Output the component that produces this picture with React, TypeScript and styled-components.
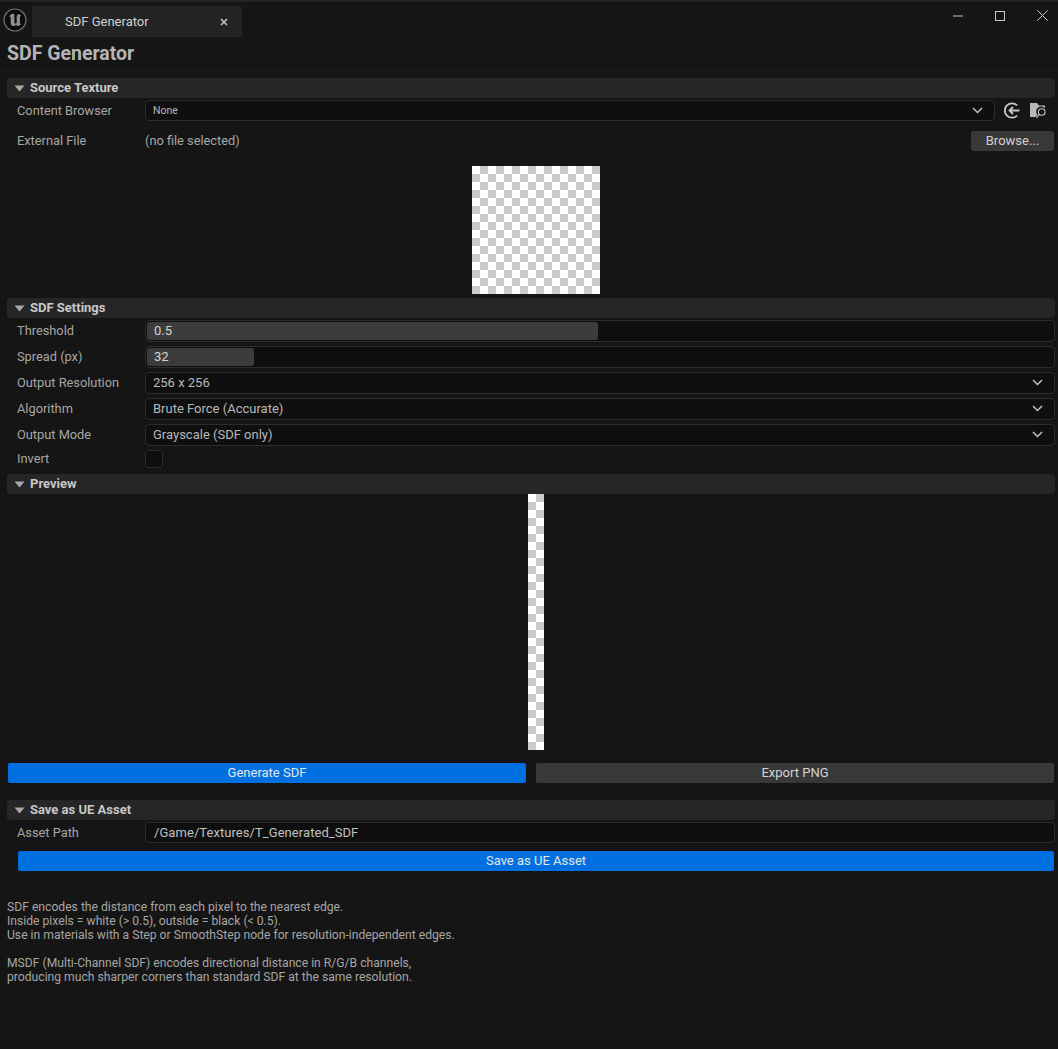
import styled, { createGlobalStyle } from "styled-components";

const GlobalStyle = createGlobalStyle`
    html, body {
        margin: 0;
        padding: 0;
        background: #151515;
    }
    * {
        box-sizing: border-box;
    }
`;

const selectRows = [
    { label: "Output Resolution", value: "256 x 256" },
    { label: "Algorithm", value: "Brute Force (Accurate)" },
    { label: "Output Mode", value: "Grayscale (SDF only)" }
];

const Chevron = () => (
    <svg width="11" height="7" viewBox="0 0 11 7" fill="none">
        <path d="M1 1l4.5 4.5L10 1" stroke="#c0c0c0" strokeWidth="1.5" />
    </svg>
);

const Caret = () => (
    <svg width="11" height="7" viewBox="0 0 11 7">
        <path d="M0.5 0.5h10L5.5 6.5z" fill="#a8a8a8" />
    </svg>
);

const App = () => {
    return (
        <>
            <GlobalStyle />
            <Window>
                <TitleBar>
                    <Logo>
                        <svg width="24" height="24" viewBox="0 0 24 24" fill="none">
                            <circle cx="12" cy="12" r="11" fill="#0b0b0b" stroke="#6e6e6e" strokeWidth="1.2" />
                            <path
                                d="M9.500 5.500C7.800 6.300 6.500 7.600 6 9.200c.6-.5 1.200-.6 1.700-.3v6.300c0 1.600 1.200 2.900 2.800 2.900 1 0 1.900-.5 2.500-1.300l1.700 1.500 3.600-2.100c-.9-.3-1.400-.8-1.400-1.800V8.500c.4-.3.900-.4 1.300-.2-.6-1.200-1.700-2-3.100-2.300-.1.800-.6 1.300-1.400 1.700v7.300l-1 .6c-.8.2-1.300-.2-1.300-1V6.900c-.6-.9-1.400-1.400-2.400-1.400z"
                                fill="#8e8e8e"
                            />
                        </svg>
                    </Logo>
                    <Tab>
                        <TabTitle>SDF Generator</TabTitle>
                        <TabClose>
                            <svg width="8" height="8" viewBox="0 0 8 8" fill="none">
                                <path d="M1 1l6 6M7 1L1 7" stroke="#c4c4c4" strokeWidth="1.6" />
                            </svg>
                        </TabClose>
                    </Tab>
                    <WindowControls>
                        <svg width="10" height="2" viewBox="0 0 10 2">
                            <path d="M0 1h10" stroke="#c8c8c8" strokeWidth="1" />
                        </svg>
                        <svg width="10" height="10" viewBox="0 0 10 10" fill="none">
                            <rect x=".5" y=".5" width="9" height="9" stroke="#c8c8c8" />
                        </svg>
                        <svg width="11" height="11" viewBox="0 0 11 11" fill="none">
                            <path d="M.3.3l10.400 10.400M10.700.3L.3 10.700" stroke="#c8c8c8" strokeWidth="1" />
                        </svg>
                    </WindowControls>
                </TitleBar>
                <PageTitle>SDF Generator</PageTitle>
                <Divider />
                <Content>
                    <SectionHeader>
                        <Caret />
                        <HeaderText>Source Texture</HeaderText>
                    </SectionHeader>
                    <Row $height={21}>
                        <Label>Content Browser</Label>
                        <Combo $small>
                            None
                            <Chevron />
                        </Combo>
                        <IconGroup>
                            <svg width="17" height="17" viewBox="0 0 17 17" fill="none">
                                <path d="M13.100 3.400a7.200 7.200 0 1 0 0 10.200" stroke="#c8c8c8" strokeWidth="1.800" />
                                <path d="M15.500 8.500H5.500M9 5L5.500 8.500 9 12" stroke="#c8c8c8" strokeWidth="1.800" />
                            </svg>
                            <svg width="17" height="17" viewBox="0 0 17 17">
                                <path d="M0 1h7l2 2.500h6v2.700A5 5 0 0 0 7.500 13L5.700 15H0z" fill="#b8b8b8" />
                                <circle cx="11.700" cy="10" r="3.300" fill="none" stroke="#c8c8c8" strokeWidth="1.100" />
                                <path d="M9.300 12.400L6.500 16" stroke="#c8c8c8" strokeWidth="1.200" />
                            </svg>
                        </IconGroup>
                    </Row>
                    <FileRow>
                        <Label>External File</Label>
                        <FileName>(no file selected)</FileName>
                        <BrowseButton>Browse...</BrowseButton>
                    </FileRow>
                    <Thumbnail />
                    <SectionHeader>
                        <Caret />
                        <HeaderText>SDF Settings</HeaderText>
                    </SectionHeader>
                    <Settings>
                        <Row $height={22}>
                            <Label>Threshold</Label>
                            <Slider>
                                <SliderFill $percent={49.8}>0.5</SliderFill>
                            </Slider>
                        </Row>
                        <Row $height={22}>
                            <Label>Spread (px)</Label>
                            <Slider>
                                <SliderFill $percent={11.8}>32</SliderFill>
                            </Slider>
                        </Row>
                        {selectRows.map(v => (
                            <Row $height={22} key={v.label}>
                                <Label>{v.label}</Label>
                                <Combo>
                                    {v.value}
                                    <Chevron />
                                </Combo>
                            </Row>
                        ))}
                        <Row $height={18}>
                            <Label>Invert</Label>
                            <Checkbox />
                        </Row>
                    </Settings>
                    <SectionHeader>
                        <Caret />
                        <HeaderText>Preview</HeaderText>
                    </SectionHeader>
                    <PreviewStrip />
                    <ButtonRow>
                        <Button $primary>Generate SDF</Button>
                        <Button>Export PNG</Button>
                    </ButtonRow>
                    <SectionHeader>
                        <Caret />
                        <HeaderText>Save as UE Asset</HeaderText>
                    </SectionHeader>
                    <Row $height={21}>
                        <Label>Asset Path</Label>
                        <TextInput>/Game/Textures/T_Generated_SDF</TextInput>
                    </Row>
                    <SaveButton $primary>Save as UE Asset</SaveButton>
                </Content>
                <Notes>
                    SDF encodes the distance from each pixel to the nearest edge.
                    <br />
                    Inside pixels = white (&gt; 0.5), outside = black (&lt; 0.5).
                    <br />
                    Use in materials with a Step or SmoothStep node for resolution-independent edges.
                    <br />
                    <br />
                    MSDF (Multi-Channel SDF) encodes directional distance in R/G/B channels,
                    <br />
                    producing much sharper corners than standard SDF at the same resolution.
                </Notes>
            </Window>
        </>
    );
};

const Window = styled.div`
    width: 1058px;
    height: 1049px;
    overflow: hidden;
    background: #151515;
    font-family: "Roboto", "Liberation Sans", sans-serif;
    color: #c0c0c0;
    font-size: 13px;
`;

const TitleBar = styled.div`
    display: flex;
    align-items: flex-end;
    height: 37px;
    padding: 6px 0 0 3px;
    background: #151515;
    border-top: 2px solid #232323;
`;

const Logo = styled.div`
    display: flex;
    align-self: flex-start;
    width: 29px;
    height: 26px;
`;

const Tab = styled.div`
    display: flex;
    align-items: center;
    justify-content: space-between;
    width: 210px;
    height: 31px;
    padding: 0 14px 0 33px;
    background: #242424;
    border-radius: 3px 3px 0 0;
`;

const TabTitle = styled.span`
    font-size: 13px;
    color: #d0d0d0;
`;

const TabClose = styled.span`
    display: flex;
`;

const WindowControls = styled.div`
    display: flex;
    align-items: center;
    gap: 32px;
    align-self: flex-start;
    margin-left: auto;
    height: 17px;
    margin-top: -1px;
    padding-right: 10px;
`;

const PageTitle = styled.div`
    height: 33px;
    padding: 5px 0 0 7px;
    font-size: 19.500px;
    line-height: 23px;
    font-weight: 700;
    color: #b4b4b4;
`;

const Divider = styled.div`
    height: 1px;
    background: #1c1c1c;
`;

const Content = styled.div`
    padding: 7px 3px 0 7px;
`;

const SectionHeader = styled.div`
    display: flex;
    align-items: center;
    gap: 5px;
    height: 20px;
    padding-left: 7px;
    background: #262626;
    border-radius: 3px;
`;

const HeaderText = styled.span`
    margin-bottom: 1px;
    font-size: 13px;
    line-height: 15px;
    font-weight: 700;
    color: #c8c8c8;
`;

const Label = styled.div`
    flex: none;
    width: 138px;
    padding: 0 0 1px 10px;
    color: #a6a6a6;
    font-size: 12.800px;
    line-height: 15px;
`;

const Row = styled.div<{ $height: number }>`
    display: flex;
    align-items: center;
    height: ${p => p.$height}px;
    margin-top: 2px;
    ${Label} {
        padding-bottom: ${p => (p.$height % 2 === 0 ? 1 : 0)}px;
    }
`;

const Combo = styled.div<{ $small?: boolean }>`
    flex: 1;
    display: flex;
    align-items: center;
    justify-content: space-between;
    height: 100%;
    padding: 0 11px ${p => (p.$small ? 0 : 1)}px 7px;
    background: #0f0f0f;
    border: 1px solid #2c2c2c;
    border-radius: 4px;
    color: #b8b8b8;
    font-size: ${p => (p.$small ? "10.500px" : "13px")};
    line-height: 15px;
`;

const IconGroup = styled.div`
    flex: none;
    display: flex;
    align-items: center;
    gap: 9px;
    width: 60px;
    padding-left: 9px;
`;

const FileRow = styled.div`
    display: flex;
    align-items: center;
    height: 20px;
    margin-top: 10px;
`;

const FileName = styled.div`
    flex: 1;
    padding-bottom: 1px;
    color: #a6a6a6;
    font-size: 12.800px;
    line-height: 15px;
`;

const BrowseButton = styled.div`
    flex: none;
    display: flex;
    align-items: center;
    justify-content: center;
    width: 83px;
    height: 20px;
    margin-right: 1px;
    padding-bottom: 1px;
    background: #383838;
    border-radius: 3px;
    color: #d0d0d0;
    font-size: 13px;
    line-height: 15px;
`;

const checker = `
    background-image: conic-gradient(#cccccc 0 25%, #ffffff 0 50%, #cccccc 0 75%, #ffffff 0);
    background-size: 16px 16px;
`;

const Thumbnail = styled.div`
    width: 128px;
    height: 128px;
    margin: 15px 0 4px 465px;
    ${checker}
`;

const Settings = styled.div`
    display: flex;
    flex-direction: column;
    gap: 2px;
    padding: 2px 0 6px;
    & > div {
        margin-top: 2px;
    }
    & > div:first-child {
        margin-top: 0;
    }
`;

const Slider = styled.div`
    flex: 1;
    height: 100%;
    padding: 1px;
    background: #0f0f0f;
    border: 1px solid #2c2c2c;
    border-radius: 4px;
`;

const SliderFill = styled.div<{ $percent: number }>`
    display: flex;
    align-items: center;
    width: ${p => p.$percent}%;
    height: 100%;
    padding: 0 0 1px 7px;
    background: #3c3c3c;
    border-radius: 3px;
    color: #d4d4d4;
    font-size: 13px;
    line-height: 15px;
`;

const Checkbox = styled.div`
    width: 18px;
    height: 18px;
    background: #0f0f0f;
    border: 1px solid #2c2c2c;
    border-radius: 3px;
`;

const PreviewStrip = styled.div`
    width: 16px;
    height: 256px;
    margin-left: 521px;
    ${checker}
`;

const ButtonRow = styled.div`
    display: grid;
    grid-template-columns: 518px 518px;
    gap: 10px;
    margin: 13px 0 17px 1px;
`;

const Button = styled.div<{ $primary?: boolean }>`
    display: flex;
    align-items: center;
    justify-content: center;
    height: 20px;
    padding-bottom: 1px;
    background: ${p => (p.$primary ? "#0070e0" : "#383838")};
    border-radius: 2px;
    color: ${p => (p.$primary ? "#e6e6e6" : "#d4d4d4")};
    font-size: 13px;
    line-height: 15px;
`;

const SaveButton = styled(Button)`
    margin: 8px 1px 0 11px;
`;

const TextInput = styled.div`
    flex: 1;
    display: flex;
    align-items: center;
    height: 100%;
    padding-left: 8px;
    background: #0f0f0f;
    border: 1px solid #2c2c2c;
    border-radius: 4px;
    color: #c0c0c0;
    font-size: 13px;
    line-height: 15px;
    letter-spacing: 0.06px;
`;

const Notes = styled.div`
    margin-top: 29px;
    padding-left: 7px;
    font-size: 12.150px;
    line-height: 14px;
    color: #a6a6a6;
`;

export default App;
